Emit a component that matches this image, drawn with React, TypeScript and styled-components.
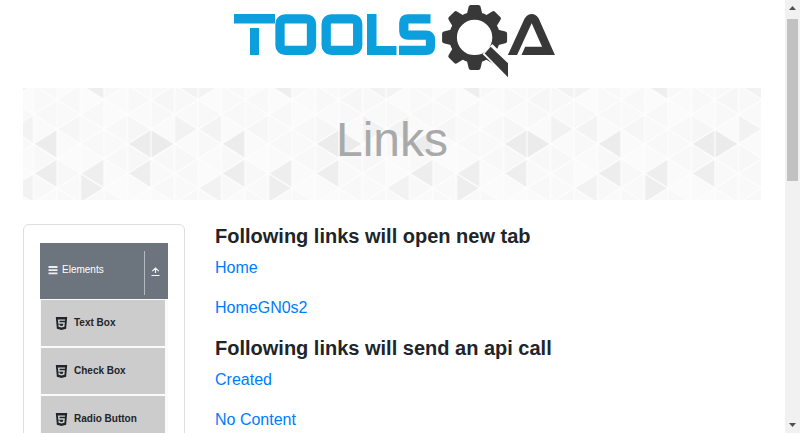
import React from "react";
import styled, { createGlobalStyle } from "styled-components";
import { SiHtml5 } from "react-icons/si";

const GlobalStyle = createGlobalStyle`
  *, *::before, *::after { box-sizing: border-box; }
  body {
    margin: 0;
    overflow: hidden;
    background: #fff;
    color: #212529;
    font-family: "Liberation Sans", Arial, sans-serif;
    font-size: 16px;
    line-height: 24px;
  }
`;

const Viewport = styled.div`
  display: grid;
  grid-template-columns: minmax(0, 1fr) 15px;
  height: 100vh;
`;

const Page = styled.div`
  overflow: hidden;
`;

const Header = styled.header`
  display: flex;
  justify-content: center;
  height: 88px;
`;

const Body = styled.div`
  padding: 0 24px 0 23px;
`;

const Banner = styled.div`
  display: grid;
  margin-bottom: 24px;
  > * { grid-area: 1 / 1; }
`;

const BannerArt = styled.svg`
  display: block;
  width: 100%;
  height: 112px;
`;

const BannerTitle = styled.h1`
  margin: 0;
  padding-top: 16px;
  font-size: 48px;
  font-weight: 400;
  line-height: 72px;
  text-align: center;
  color: #a9a9a9;
  z-index: 1;
`;

const Columns = styled.div`
  display: grid;
  grid-template-columns: repeat(4, minmax(0, 1fr));
  gap: 30px;
  align-items: start;
`;

const Sidebar = styled.nav`
  padding: 18px 16px;
  border: 1px solid #dfdfdf;
  border-radius: 6px;
  font-size: 10px;
`;

const GroupHeader = styled.button`
  display: flex;
  align-items: stretch;
  width: 100%;
  height: 56px;
  padding: 8px 8px 4px;
  border: 0;
  background: #6c757d;
  color: #fff;
  font: inherit;
  line-height: 16px;
  text-align: left;
`;

const GroupLabel = styled.span`
  display: flex;
  flex: 1;
  align-items: center;
  gap: 4px;
  padding-bottom: 6px;
`;

const Toggle = styled.span`
  display: flex;
  align-items: center;
  padding: 0 0 4px 6px;
  border-left: 1px solid #b5babe;
`;

const MenuList = styled.ul`
  display: grid;
  gap: 2px;
  margin: 0;
  padding: 1px 3px 1px 1px;
  background: #fafafa;
  list-style: none;
`;

const MenuLink = styled.a`
  display: flex;
  align-items: center;
  gap: 6px;
  height: 46px;
  padding-left: 14px;
  background: #ccc;
  color: #212529;
  font-weight: 700;
  text-decoration: none;
`;

const Main = styled.main`
  grid-column: span 3;
`;

const SectionTitle = styled.h2`
  margin: 0 0 8px;
  font-size: 20px;
  line-height: 24px;
`;

const LinkLine = styled.p`
  margin: 0 0 16px;
`;

const TextLink = styled.a`
  color: #007bff;
  text-decoration: none;
`;

const Scrollbar = styled.div`
  display: flex;
  flex-direction: column;
  padding: 0 2px;
  background: #f1f1f1;
`;

const ScrollArrow = styled.svg`
  display: block;
  width: 11px;
  height: 19px;
`;

const ScrollTrack = styled.div`
  flex: 1;
`;

const ScrollThumb = styled.div`
  width: 11px;
  height: 41%;
  background: #c1c1c1;
`;

const TOOTH_ANGLES = [0, 45, 90, 135, 180, 225, 270, 315];

function Logo() {
  return (
    <svg width="329" height="88" viewBox="228 0 329 88" role="img" aria-label="TOOLSQA">
      <defs>
        <clipPath id="baseline">
          <rect x="500" y="0" width="60" height="55" />
        </clipPath>
      </defs>
      <g fill="#0b9fdd">
        <rect x="234" y="14" width="41" height="9.5" />
        <rect x="250" y="28" width="9" height="27" />
        <rect x="367" y="14" width="9.5" height="41" />
        <rect x="367" y="46" width="29.5" height="9" />
      </g>
      <g fill="none" stroke="#0b9fdd" strokeWidth="9.3">
        <rect x="280" y="18.9" width="31.5" height="31.5" rx="5" />
        <rect x="326.2" y="18.9" width="31.5" height="31.5" rx="5" />
        <path d="M430.5 18.8H408q-4.2 0-4.2 4.2v8q0 4.2 4.2 4.2h18.3q4.2 0 4.2 4.2v6.8q0 4.2-4.2 4.2H399" />
      </g>
      <g fill="#383838">
        <circle cx="474.6" cy="37.4" r="21.5" fill="none" stroke="#383838" strokeWidth="7.6" />
        {TOOTH_ANGLES.map((angle) => (
          <path
            key={angle}
            d="M466.8 14.5l1.9-7.9q.4-1.7 2.1-1.7h7.6q1.7 0 2.1 1.7l1.9 7.9z"
            transform={`rotate(${angle} 474.6 37.4)`}
          />
        ))}
        <path d="M482.5 54L492.3 44l19 18.5V82z" fill="#fff" />
        <path d="M484.7 53.6l6-6.9L508 63.2v14z" />
      </g>
      <g clipPath="url(#baseline)" fill="none" stroke="#383838">
        <path d="M509.8 60.8L528.3 20.6q3.4-4.8 6.8 0L551.2 57" strokeWidth="8.4" strokeLinejoin="round" />
        <path d="M525.2 46.7H545l4 8.3H521.5z" fill="#383838" stroke="none" />
      </g>
    </svg>
  );
}

const COL = 23.5;
const ROW = 14.75;
const SHADES: Record<string, string> = {
  "0-4": "#ececec", "0-6": "#ededed",
  "2-0": "#eeeeee", "2-6": "#eeeeee", "2-7": "#eeeeee",
  "4-4": "#ececec", "4-6": "#eeeeee", "5-4": "#ebebeb",
  "6-0": "#f2f2f2", "7-0": "#f3f3f3", "6-3": "#f2f2f2", "7-3": "#f3f3f3",
  "7-7": "#f2f2f2", "1-3": "#f6f6f6", "4-3": "#f6f6f6", "5-1": "#f6f6f6",
  "4-5": "#f7f7f7", "6-5": "#f7f7f7",
};
const LIGHT = ["#f8f8f8", "#fafafa", "#f9f9f9", "#fbfbfb", "#f8f8f8"];

const TRIANGLES = Array.from({ length: 8 }, (_, s) =>
  Array.from({ length: 9 }, (_, j) => {
    const y = -3 + ROW * j;
    const left = s * COL;
    const right = left + COL;
    const apexLeft = s % 2 === j % 2;
    const apex = apexLeft ? left : right;
    const base = apexLeft ? right : left;
    return {
      key: `${s}-${j}`,
      points: `${apex},${y} ${base},${y - ROW} ${base},${y + ROW}`,
      fill: SHADES[`${s}-${j}`] ?? LIGHT[(s * 3 + j * 2) % LIGHT.length],
    };
  })
).flat();

function TrianglePattern() {
  return (
    <BannerArt aria-hidden="true">
      <defs>
        <pattern id="triangles" x="10.5" width={COL * 8} height="112" patternUnits="userSpaceOnUse">
          {TRIANGLES.map((t) => (
            <polygon key={t.key} points={t.points} fill={t.fill} stroke="#fdfdfd" strokeWidth="1.2" />
          ))}
        </pattern>
      </defs>
      <rect width="100%" height="112" fill="url(#triangles)" />
    </BannerArt>
  );
}

const MENU = ["Text Box", "Check Box", "Radio Button"];

const SECTIONS = [
  { title: "Following links will open new tab", links: ["Home", "HomeGN0s2"] },
  { title: "Following links will send an api call", links: ["Created", "No Content"] },
];

export default function App() {
  return (
    <>
      <GlobalStyle />
      <Viewport>
        <Page>
          <Header>
            <Logo />
          </Header>
          <Body>
            <Banner>
              <TrianglePattern />
              <BannerTitle>Links</BannerTitle>
            </Banner>
            <Columns>
              <Sidebar aria-label="Elements">
                <GroupHeader type="button" aria-expanded="true">
                  <GroupLabel>
                    <svg width="10" height="10" viewBox="0 0 10 10" aria-hidden="true">
                      <path d="M.5 2h9M.5 5.2h9M.5 8.4h9" stroke="#eceeef" strokeWidth="1.8" />
                    </svg>
                    Elements
                  </GroupLabel>
                  <Toggle>
                    <svg width="9" height="10" viewBox="0 0 9 10" aria-hidden="true">
                      <path d="M.5 9.5h8M4.5 7V2M1.3 5.2l3.2-3.2 3.2 3.2" fill="none" stroke="#f4f5f6" strokeWidth="1.2" />
                    </svg>
                  </Toggle>
                </GroupHeader>
                <MenuList>
                  {MENU.map((label) => (
                    <li key={label}>
                      <MenuLink href="#">
                        <SiHtml5 size={13} aria-hidden="true" />
                        {label}
                      </MenuLink>
                    </li>
                  ))}
                </MenuList>
              </Sidebar>
              <Main>
                {SECTIONS.map((section) => (
                  <section key={section.title}>
                    <SectionTitle>{section.title}</SectionTitle>
                    {section.links.map((label) => (
                      <LinkLine key={label}>
                        <TextLink href="#">{label}</TextLink>
                      </LinkLine>
                    ))}
                  </section>
                ))}
              </Main>
            </Columns>
          </Body>
        </Page>
        <Scrollbar aria-hidden="true">
          <ScrollArrow viewBox="0 0 11 19">
            <path d="M2 10l3.5-4L9 10z" fill="#505050" />
          </ScrollArrow>
          <ScrollTrack>
            <ScrollThumb />
          </ScrollTrack>
          <ScrollArrow viewBox="0 0 11 19">
            <path d="M2 9l3.5 4L9 9z" fill="#505050" />
          </ScrollArrow>
        </Scrollbar>
      </Viewport>
    </>
  );
}
